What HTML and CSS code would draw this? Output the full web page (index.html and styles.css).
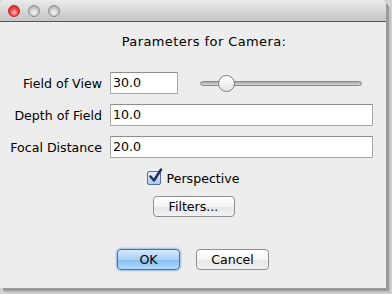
FILE: index.html
```html
<!DOCTYPE html>
<html lang="en">
<head>
    <meta charset="UTF-8">
    <title>Parameters for Camera</title>
    <link rel="stylesheet" href="styles.css">
</head>
<body>
    <div class="window">
        <div class="titlebar">
            <span class="light light-close"></span>
            <span class="light"></span>
            <span class="light"></span>
        </div>

        <div class="content">
            <div class="heading">Parameters for Camera:</div>

            <div class="form">
                <label class="label">Field of View</label>
                <div class="field-row">
                    <div class="input short">30.0</div>
                    <div class="slider">
                        <div class="track"></div>
                        <div class="knob"></div>
                    </div>
                </div>

                <label class="label">Depth of Field</label>
                <div class="input">10.0</div>

                <label class="label">Focal Distance</label>
                <div class="input">20.0</div>
            </div>

            <div class="check-row">
                <span class="checkbox">
                    <svg width="16" height="16" viewBox="0 0 16 16">
                        <path d="M3.5 8.5 L7 12.5 L14 1.5" fill="none" stroke="#1d2a5a" stroke-width="2.4" stroke-linecap="round" stroke-linejoin="round"/>
                    </svg>
                </span>
                <span>Perspective</span>
            </div>

            <div class="center-row">
                <button class="btn btn-filters">Filters...</button>
            </div>

            <div class="actions">
                <button class="btn btn-default">OK</button>
                <button class="btn btn-cancel">Cancel</button>
            </div>
        </div>
    </div>
</body>
</html>
```

FILE: styles.css
```css
* {
    margin: 0;
    padding: 0;
    box-sizing: border-box;
}

body {
    width: 392px;
    height: 294px;
    background: #d4d4d4;
    font-family: 'DejaVu Sans', 'Liberation Sans', sans-serif;
    font-size: 12.6px;
    color: #000;
    overflow: hidden;
}

.window {
    width: 386px;
    height: 288px;
    background: #ededed;
    border-radius: 5px 5px 0 0;
    box-shadow: 3px 3px 0 #9a9a9a, 5px 5px 0 #c4c4c4;
    overflow: hidden;
}

.titlebar {
    height: 22px;
    background: linear-gradient(#ebebeb, #c5c5c5);
    border-bottom: 1px solid #555;
    display: flex;
    align-items: center;
    gap: 8px;
    padding-left: 8px;
}

.light {
    width: 12px;
    height: 12px;
    border-radius: 50%;
    border: 1px solid #8c8c8c;
    background: radial-gradient(circle at 50% 65%, #f4f4f4 0%, #d0d0d0 45%, #9c9c9c 100%);
}

.light-close {
    border-color: #b02626;
    background: radial-gradient(circle at 50% 65%, #ffc0c0 0%, #ff4848 45%, #c81a1a 100%);
}

.content {
    display: flex;
    flex-direction: column;
}

.heading {
    text-align: center;
    font-size: 13px;
    letter-spacing: 0.4px;
    padding-left: 22px;
    margin-top: 12px;
    height: 16px;
    line-height: 16px;
}

.form {
    display: grid;
    grid-template-columns: 92px 263px;
    column-gap: 8px;
    row-gap: 10px;
    padding-left: 10px;
    margin-top: 22px;
    align-items: center;
}

.label {
    text-align: right;
}

.field-row {
    display: flex;
    align-items: center;
}

.input {
    height: 22px;
    line-height: 20px;
    background: #fff;
    border: 1px solid #a8a8a8;
    border-top-color: #8e8e8e;
    padding-left: 2px;
}

.input.short {
    width: 68px;
}

.slider {
    position: relative;
    width: 162px;
    height: 18px;
    margin-left: 22px;
    margin-top: -1px;
}

.track {
    position: absolute;
    left: 0;
    right: 0;
    top: 7px;
    height: 5px;
    border-radius: 3px;
    border: 1px solid #8a8a8a;
    background: linear-gradient(#a8a8a8, #d6d6d6);
}

.knob {
    position: absolute;
    left: 18px;
    top: 1px;
    width: 17px;
    height: 17px;
    border-radius: 50%;
    border: 1px solid #7e7e7e;
    background: linear-gradient(#ffffff, #e4e4e4);
}

.check-row {
    display: flex;
    align-items: center;
    justify-content: center;
    gap: 6px;
    margin-top: 12px;
    height: 16px;
}

.checkbox {
    position: relative;
    width: 14px;
    height: 14px;
    border: 1px solid #5a6e95;
    border-radius: 2px;
    background: linear-gradient(#e4f0fc, #a8c8ec);
}

.checkbox svg {
    position: absolute;
    left: -1px;
    top: -4px;
}

.center-row {
    display: flex;
    justify-content: center;
    margin-top: 10px;
}

.btn {
    font-family: 'DejaVu Sans', 'Liberation Sans', sans-serif;
    font-size: 12.6px;
    color: #000;
    height: 21px;
    border-radius: 4px;
    border: 1px solid #8e8e8e;
    background: linear-gradient(#ffffff 0%, #f4f4f4 50%, #e6e6e6 51%, #f2f2f2 100%);
}

.btn-filters {
    width: 82px;
    margin-left: 1px;
}

.actions {
    display: flex;
    justify-content: center;
    gap: 16px;
    margin-top: 32px;
}

.btn-default {
    width: 63px;
    border-color: #4a6fa3;
    background: linear-gradient(#d4e9fb 0%, #a9d1f6 50%, #84bdf0 51%, #b2dafa 100%);
    box-shadow: 0 0 2px 1px rgba(90, 150, 220, 0.55);
}

.btn-cancel {
    width: 73px;
}
```
